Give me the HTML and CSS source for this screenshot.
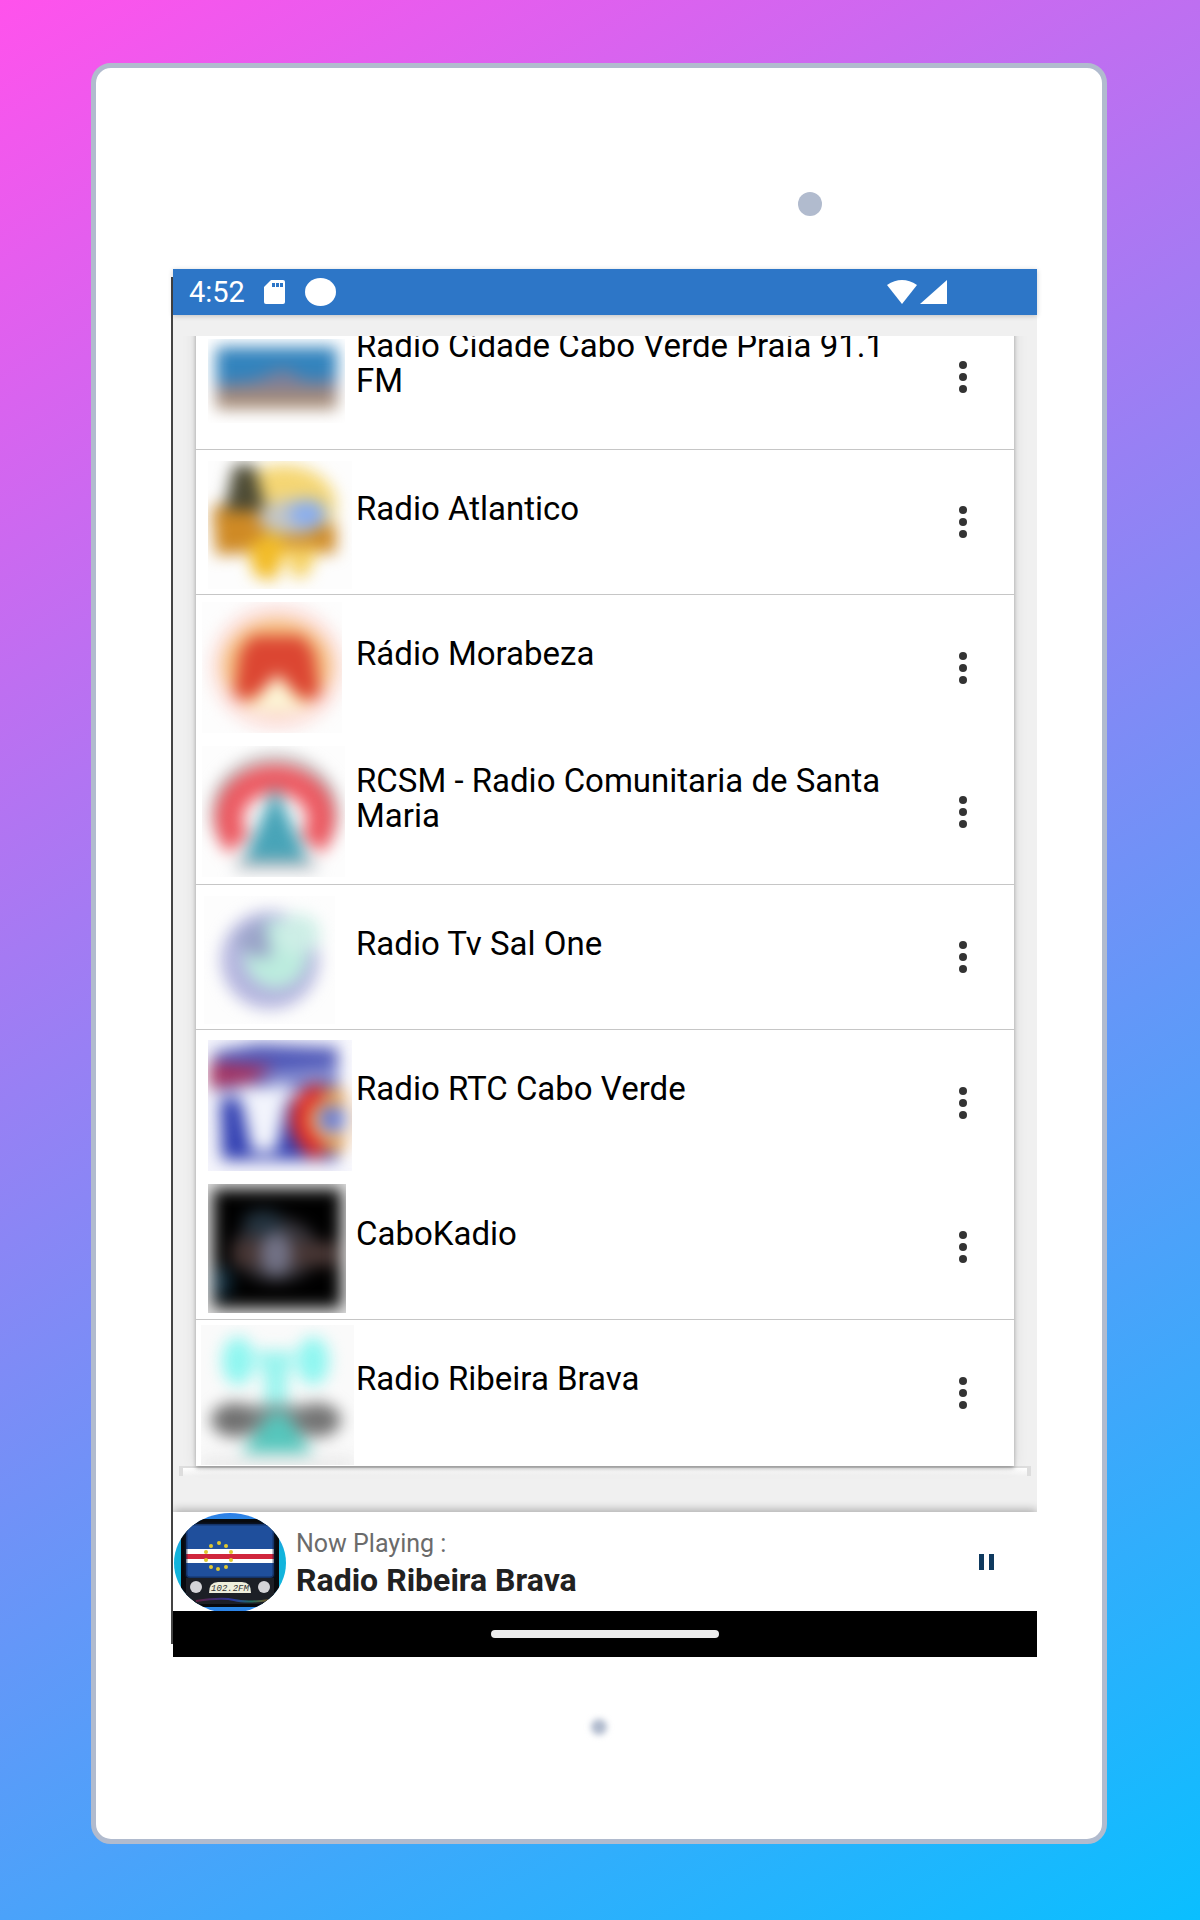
FILE: index.html
```
<!DOCTYPE html>
<html lang="pt">
<head>
  <meta charset="UTF-8">
  <meta name="viewport" content="width=device-width, initial-scale=1.0">
  <title>Radio Cabo Verde</title>
  <link rel="stylesheet" href="styles.css">
</head>
<body>

  <div class="tablet">
    <div class="bezel-top"><span class="camera"></span></div>

    <div class="screen">
      <header class="status-bar">
        <span class="time">4:52</span>
        <svg class="sd-card" viewBox="0 0 21 24">
          <path d="M7 0H19Q21 0 21 2V22Q21 24 19 24H2Q0 24 0 22V7Z" fill="#fff"/>
          <path d="M8 3h3v4H8zM12 3h3v4h-3zM16 3h3v4h-3z" fill="#2d76c7"/>
        </svg>
        <span class="status-dot"></span>
        <svg class="signal" viewBox="0 0 60 24">
          <path d="M0 5Q15 -5 30 5L15 24Z" fill="#fff"/>
          <path d="M60 0V24H33Z" fill="#fff"/>
        </svg>
      </header>

      <main class="list-view">
        <ul class="card">
          <li class="station divided">
            <svg class="thumb" viewBox="0 0 158 145">
              <svg x="12" y="34" width="137" height="84">
                <g class="soft">
                  <rect x="8" y="8" width="121" height="62" fill="#3283bd"/>
                  <path d="M8 45L45 42L75 30L100 42L129 40V70H8Z" fill="#7f7f98"/>
                  <rect x="8" y="52" width="121" height="18" fill="#a68c78"/>
                </g>
              </svg>
            </svg>
            <span class="name">Radio Cidade Cabo Verde Praia 91.1 FM</span>
            <button class="more" aria-label="Menu"><svg viewBox="0 0 8 34"><circle cx="4" cy="5" r="4"/><circle cx="4" cy="17" r="4"/><circle cx="4" cy="29" r="4"/></svg></button>
          </li>

          <li class="station divided">
            <svg class="thumb" viewBox="0 0 158 145">
              <svg x="12" y="11" width="144" height="128">
                <rect width="144" height="128" fill="#fdfdfd"/>
                <g class="soft">
                  <ellipse cx="76" cy="44" rx="52" ry="40" fill="#f5d673"/>
                  <path d="M4 45L55 40L80 70L128 62V92L95 92L70 90L8 94Z" fill="#cf8a25"/>
                  <path d="M40 85L65 70L80 85L66 120L46 114Z" fill="#f2bc28"/>
                  <path d="M78 86H112L98 116H84Z" fill="#f5d060"/>
                  <path d="M26 4H46L58 50H16Z" fill="#4c4a34"/>
                  <ellipse cx="84" cy="56" rx="34" ry="18" fill="#c4c6c4"/>
                  <ellipse cx="100" cy="53" rx="19" ry="15" fill="#8aaeee"/>
                </g>
              </svg>
            </svg>
            <span class="name">Radio Atlantico</span>
            <button class="more" aria-label="Menu"><svg viewBox="0 0 8 34"><circle cx="4" cy="5" r="4"/><circle cx="4" cy="17" r="4"/><circle cx="4" cy="29" r="4"/></svg></button>
          </li>

          <li class="station">
            <svg class="thumb" viewBox="0 0 158 145">
              <svg x="6" y="7" width="140" height="131">
                <rect width="140" height="131" fill="#fdfdfd"/>
                <g class="soft">
                  <ellipse cx="75" cy="65" rx="67" ry="63" fill="#fce0dc"/>
                  <ellipse cx="75" cy="64" rx="54" ry="46" fill="#f5bf7c"/>
                  <path d="M32 96L38 50L50 34H100L112 50L118 96H98L76 72L52 96Z" fill="#dc4632"/>
                  <path d="M46 108L75 72L104 108Z" fill="#fdf6d8"/>
                </g>
              </svg>
            </svg>
            <span class="name">Rádio Morabeza</span>
            <button class="more" aria-label="Menu"><svg viewBox="0 0 8 34"><circle cx="4" cy="5" r="4"/><circle cx="4" cy="17" r="4"/><circle cx="4" cy="29" r="4"/></svg></button>
          </li>

          <li class="station divided">
            <svg class="thumb" viewBox="0 0 158 145">
              <svg x="6" y="6" width="143" height="131">
                <rect width="143" height="131" fill="#fdfdfd"/>
                <g class="soft">
                  <path d="M26 100A60 54 0 1 1 120 100" fill="none" stroke="#b4b0b0" stroke-width="8"/>
                  <path d="M37 98A46 40 0 1 1 109 98" fill="none" stroke="#ec5a62" stroke-width="28"/>
                  <path d="M30 124L50 100H96L118 124Z" fill="#b8bcc2"/>
                  <path d="M73 40L106 114H42Z" fill="#48a4b8"/>
                </g>
              </svg>
            </svg>
            <span class="name">RCSM - Radio Comunitaria de Santa Maria</span>
            <button class="more" aria-label="Menu"><svg viewBox="0 0 8 34"><circle cx="4" cy="5" r="4"/><circle cx="4" cy="17" r="4"/><circle cx="4" cy="29" r="4"/></svg></button>
          </li>

          <li class="station divided">
            <svg class="thumb" viewBox="0 0 158 145">
              <svg x="8" y="11" width="131" height="128">
                <rect width="131" height="128" fill="#fdfdfd"/>
                <g class="soft">
                  <circle cx="66" cy="64" r="49" fill="#b4b5de"/>
                  <ellipse cx="72" cy="58" rx="32" ry="34" fill="#bcecde"/>
                  <ellipse cx="94" cy="38" rx="22" ry="20" fill="#cdeee6"/>
                  <path d="M30 42L60 22L68 62L46 60Z" fill="#9aa4c8"/>
                </g>
              </svg>
            </svg>
            <span class="name">Radio Tv Sal One</span>
            <button class="more" aria-label="Menu"><svg viewBox="0 0 8 34"><circle cx="4" cy="5" r="4"/><circle cx="4" cy="17" r="4"/><circle cx="4" cy="29" r="4"/></svg></button>
          </li>

          <li class="station">
            <svg class="thumb" viewBox="0 0 158 145">
              <svg x="12" y="10" width="144" height="131">
                <rect width="144" height="131" fill="#f5f5fc"/>
                <g class="soft">
                  <path d="M6 12L50 4L130 8V50H6Z" fill="#4f58b8"/>
                  <path d="M2 22L66 26L44 42L2 48Z" fill="#a83460"/>
                  <path d="M50 34L130 26V40L70 46Z" fill="#8c94d4"/>
                  <path d="M12 58H130V120H14Z" fill="#3240b2"/>
                  <path d="M30 46H82L68 112H44Z" fill="#f2f4fc"/>
                  <circle cx="124" cy="80" r="24" fill="#f4f0f0" stroke="#e8a04c" stroke-width="16"/>
                  <path d="M114 50Q86 62 92 86Q96 104 114 112" fill="none" stroke="#de2c28" stroke-width="18"/>
                  <circle cx="124" cy="79" r="14" fill="#6c7ccc"/>
                  <rect x="137" y="0" width="12" height="131" fill="#fff"/>
                </g>
              </svg>
            </svg>
            <span class="name">Radio RTC Cabo Verde</span>
            <button class="more" aria-label="Menu"><svg viewBox="0 0 8 34"><circle cx="4" cy="5" r="4"/><circle cx="4" cy="17" r="4"/><circle cx="4" cy="29" r="4"/></svg></button>
          </li>

          <li class="station divided">
            <svg class="thumb" viewBox="0 0 158 145">
              <svg x="12" y="9" width="138" height="129">
                <rect width="138" height="129" fill="#e4e4e4"/>
                <g class="soft">
                  <rect x="5" y="5" width="128" height="119" fill="#000"/>
                  <ellipse cx="68" cy="66" rx="42" ry="32" fill="#36343a"/>
                  <rect x="24" y="58" width="106" height="24" fill="#483634"/>
                  <ellipse cx="68" cy="70" rx="16" ry="22" fill="#727286"/>
                  <ellipse cx="55" cy="38" rx="20" ry="12" fill="#22323e"/>
                  <ellipse cx="14" cy="98" rx="10" ry="16" fill="#143040"/>
                </g>
              </svg>
            </svg>
            <span class="name">CaboKadio</span>
            <button class="more" aria-label="Menu"><svg viewBox="0 0 8 34"><circle cx="4" cy="5" r="4"/><circle cx="4" cy="17" r="4"/><circle cx="4" cy="29" r="4"/></svg></button>
          </li>

          <li class="station">
            <svg class="thumb" viewBox="0 0 158 145">
              <svg x="5" y="5" width="153" height="140">
                <rect width="153" height="140" fill="#fafafa"/>
                <g class="soft">
                  <rect x="0" y="132" width="153" height="14" fill="#e8e8e8"/>
                  <ellipse cx="37" cy="36" rx="16" ry="24" fill="#8ef6f0"/>
                  <ellipse cx="112" cy="36" rx="16" ry="24" fill="#8ef6f0"/>
                  <path d="M54 26H94L86 56V90H64V56Z" fill="#98f4ee"/>
                  <ellipse cx="34" cy="95" rx="24" ry="17" fill="#707070"/>
                  <ellipse cx="116" cy="95" rx="24" ry="17" fill="#747474"/>
                  <rect x="50" y="80" width="50" height="28" fill="#7e8686"/>
                  <path d="M70 88H84L112 128H40Z" fill="#56c6bc"/>
                </g>
              </svg>
            </svg>
            <span class="name">Radio Ribeira Brava</span>
            <button class="more" aria-label="Menu"><svg viewBox="0 0 8 34"><circle cx="4" cy="5" r="4"/><circle cx="4" cy="17" r="4"/><circle cx="4" cy="29" r="4"/></svg></button>
          </li>
        </ul>
        <div class="list-edge"></div>
      </main>

      <section class="player">
        <svg class="cover" viewBox="0 0 112 98">
          <defs>
            <clipPath id="oval"><ellipse cx="56" cy="50" rx="56" ry="50"/></clipPath>
            <linearGradient id="sky" x1="0" y1="0" x2="0" y2="1">
              <stop offset="0" stop-color="#2f7fe8"/>
              <stop offset="0.4" stop-color="#12b4dc"/>
              <stop offset="0.7" stop-color="#12b4dc"/>
              <stop offset="1" stop-color="#2f7fe8"/>
            </linearGradient>
            <linearGradient id="wave">
              <stop offset="0" stop-color="#602040"/>
              <stop offset="0.5" stop-color="#2838a0"/>
              <stop offset="0.75" stop-color="#207060"/>
              <stop offset="1" stop-color="#805020"/>
            </linearGradient>
          </defs>
          <g clip-path="url(#oval)">
            <rect width="112" height="100" fill="url(#sky)"/>
            <rect x="7" y="6" width="98" height="88" rx="8" fill="#080a0e"/>
            <rect x="12" y="11" width="88" height="54" rx="4" fill="#1f4f9c"/>
            <rect x="12" y="36" width="88" height="14" fill="#fff"/>
            <rect x="12" y="41" width="88" height="5" fill="#d0263c"/>
            <rect x="12" y="11" width="88" height="54" rx="4" fill="none" stroke="#0a1a38" stroke-opacity="0.5" stroke-width="3"/>
            <g fill="#e0c830">
              <circle cx="45" cy="30" r="2"/><circle cx="52" cy="33" r="2"/><circle cx="57" cy="39" r="2"/><circle cx="57" cy="47" r="2"/><circle cx="52" cy="54" r="2"/>
              <circle cx="44" cy="56" r="2"/><circle cx="37" cy="54" r="2"/><circle cx="32" cy="47" r="2"/><circle cx="32" cy="39" r="2"/><circle cx="37" cy="33" r="2"/>
            </g>
            <rect x="12" y="65" width="88" height="26" fill="#1c1f26"/>
            <circle cx="22" cy="74" r="6" fill="#d4d4d8"/>
            <circle cx="90" cy="74" r="6" fill="#d4d4d8"/>
            <path d="M35 80Q35 69 44 69H68Q77 69 77 80Z" fill="#eeeedc"/>
            <text class="frequency" x="56" y="78" text-anchor="middle">102.2FM</text>
            <path d="M22 88Q48 84 60 87T96 87" fill="none" stroke="url(#wave)" stroke-width="2"/>
          </g>
        </svg>
        <div class="track">
          <p class="label">Now Playing :</p>
          <p class="title">Radio Ribeira Brava</p>
        </div>
        <button class="pause" aria-label="Pause"><svg viewBox="0 0 15 16"><path d="M0 0h5v16H0zM10 0h5v16h-5z"/></svg></button>
      </section>

      <nav class="nav-bar"><span class="pill"></span></nav>
    </div>

    <div class="bezel-bottom"><span class="home"></span></div>
  </div>

</body>
</html>
```
FILE: styles.css
```
* {
  box-sizing: border-box;
}

body {
  margin: 0;
  min-height: 100vh;
  padding: 63px 93px 76px 91px;
  font-family: Roboto, sans-serif;
  background: linear-gradient(150deg, #ff52ec, #0abfff);
}

.tablet {
  background-color: #fff;
  border: 5px solid #b1bbce;
  border-radius: 20px;
}

.bezel-top {
  height: 201px;
  padding: 124px 0 0 70%;
}

.camera {
  display: block;
  width: 24px;
  height: 24px;
  margin-left: -2px;
  border-radius: 50%;
  background-color: #b1bbce;
}

.bezel-bottom {
  height: 182px;
  padding-top: 62px;
}

.home {
  display: block;
  width: 16px;
  height: 16px;
  margin: 0 auto;
  border-radius: 50%;
  background-color: #b1bbce;
  filter: blur(3px);
}

.screen {
  position: relative;
  margin: 0 65px 0 77px;
  background-color: #f0f0f0;
}

/* dark edge on the left side of the screen */
.screen::before {
  content: "";
  position: absolute;
  top: 8px;
  bottom: 13px;
  left: -2px;
  width: 2px;
  background-color: #444;
}

.status-bar {
  position: relative;
  display: flex;
  align-items: center;
  height: 46px;
  padding: 0 90px 0 16px;
  background-color: #2d76c7;
  box-shadow: 0 1px 5px rgba(0, 0, 0, 0.2);
}

.time {
  color: #fff;
  font-size: 29px;
}

.sd-card {
  width: 21px;
  height: 24px;
  margin-left: 19px;
}

.status-dot {
  width: 31px;
  height: 28px;
  margin-left: 20px;
  border-radius: 50%;
  background-color: #fff;
}

.signal {
  width: 60px;
  height: 24px;
  margin-left: auto;
}

.list-view {
  margin-top: 21px;
  padding-bottom: 36px;
  overflow: hidden;
}

/* the list is scrolled a little, so the first row is cut */
.card {
  position: relative;
  margin: -31px 23px 0;
  padding: 0 0 1px;
  list-style: none;
  background-color: #fff;
  box-shadow: 0 2px 4px rgba(0, 0, 0, 0.3), 0 0 14px rgba(0, 0, 0, 0.1);
}

.station {
  display: flex;
  height: 145px;
}

.station.divided {
  border-bottom: 1px solid #c6c6c6;
}

.thumb {
  flex: none;
  width: 158px;
  height: 145px;
}

.soft {
  filter: blur(8px);
}

.name {
  flex: 1;
  align-self: center;
  padding: 0 8px 28px 2px;
  font-size: 33px;
  line-height: 35px;
  color: #000;
}

.more {
  flex: none;
  width: 102px;
  padding: 0;
  border: none;
  background: none;
  cursor: pointer;
}

.more svg {
  display: block;
  width: 8px;
  height: 34px;
  margin: 0 auto;
  fill: #333;
}

.list-edge {
  height: 10px;
  margin: 0 6px;
  border: solid #ddd;
  border-width: 2px 4px 0;
  background: linear-gradient(#fff, #f0f0f0);
}

.player {
  position: relative;
  display: flex;
  align-items: center;
  height: 99px;
  padding: 0 43px 0 1px;
  background-color: #fff;
  box-shadow: 0 -2px 9px rgba(0, 0, 0, 0.3);
  clip-path: inset(-12px 0 0 0);
}

.cover {
  width: 112px;
  height: 98px;
}

.frequency {
  font-family: "Liberation Mono", monospace;
  font-size: 9px;
  font-style: italic;
  fill: #333;
}

.track {
  flex: 1;
  padding-left: 10px;
}

.track p {
  margin: 0;
}

.label {
  font-size: 25px;
  line-height: 36px;
  color: #6b6b6b;
}

.title {
  font-size: 32px;
  font-weight: bold;
  line-height: 36px;
  color: #212121;
}

.pause {
  width: 15px;
  height: 40px;
  padding: 0;
  border: none;
  background: none;
  cursor: pointer;
}

.pause svg {
  display: block;
  width: 15px;
  height: 16px;
  fill: #0f3a5f;
}

.nav-bar {
  display: flex;
  align-items: center;
  justify-content: center;
  height: 46px;
  background-color: #000;
}

.pill {
  width: 228px;
  height: 8px;
  border-radius: 4px;
  background-color: #ececec;
}
```
